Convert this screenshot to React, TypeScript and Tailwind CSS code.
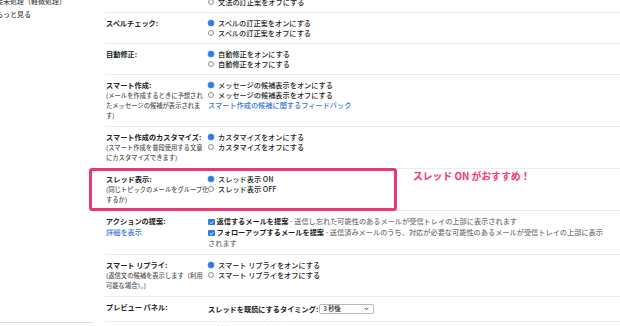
import React from "react";

function Radio({ checked, children }: { checked?: boolean; children: React.ReactNode }) {
  return (
    <div className="flex items-center h-[10px] leading-[10px]">
      {checked ? (
        <span className="w-[6px] h-[6px] rounded-full bg-[#2f7de1] shadow-[0_0_0_0.5px_#9cc0f0] shrink-0" />
      ) : (
        <span className="w-[6px] h-[6px] rounded-full border-[0.8px] border-[#8f8f8f] bg-white shrink-0" />
      )}
      <span className="ml-[4px] whitespace-nowrap">{children}</span>
    </div>
  );
}

function Check() {
  return (
    <span className="inline-flex items-center justify-center w-[6.5px] h-[6.5px] rounded-[1px] bg-[#2f7de1] align-[-0.5px] mr-[2px]">
      <svg width="5" height="5" viewBox="0 0 10 10">
        <path d="M2 5.2 L4.2 7.4 L8.2 2.8" stroke="white" strokeWidth="1.8" fill="none" />
      </svg>
    </span>
  );
}

function Row({
  label,
  sub,
  children,
  last,
}: {
  label: React.ReactNode;
  sub?: React.ReactNode;
  children: React.ReactNode;
  last?: boolean;
}) {
  return (
    <div className={"flex pt-[5px] pb-[5px] " + (last ? "" : "border-b border-[#ececec]")}>
      <div className="w-[103px] shrink-0 pl-[1px]">
        <div className="font-bold text-[7.2px] leading-[11px] text-[#222] whitespace-nowrap">{label}</div>
        {sub && <div className="font-medium text-[6.3px] leading-[10px] text-[#555] whitespace-nowrap">{sub}</div>}
      </div>
      <div className="flex-1 pr-[10px] font-medium text-[7.2px] text-[#1f1f1f]">{children}</div>
    </div>
  );
}

export default function App() {
  return (
    <div className="relative w-[620px] h-[326px] overflow-hidden bg-white flex font-['Noto_Sans_CJK_JP','Noto_Sans',sans-serif]">
      {/* Sidebar */}
      <div className="w-[93px] shrink-0 flex flex-col">
        <div className="-ml-[4px] -mt-[4px] text-[7px] font-medium text-[#444]">
          <div className="leading-[11px] whitespace-nowrap">要未処理（軽微処理）</div>
          <div className="mt-[2px] leading-[11px] whitespace-nowrap">もっと見る</div>
        </div>
        <div className="flex-1" />
        <div className="h-px bg-[#dcdcdc] mb-[3px]" />
      </div>

      {/* Main settings */}
      <div className="ml-[12px] flex-1 -mt-[18px]">
        <Row label="文法:">
          <Radio checked>文法の訂正案をオンにする</Radio>
          <Radio>文法の訂正案をオフにする</Radio>
        </Row>
        <Row label="スペルチェック:">
          <Radio checked>スペルの訂正案をオンにする</Radio>
          <Radio>スペルの訂正案をオフにする</Radio>
        </Row>
        <Row label="自動修正:">
          <Radio checked>自動修正をオンにする</Radio>
          <Radio>自動修正をオフにする</Radio>
        </Row>
        <Row
          label="スマート作成:"
          sub={
            <>
              (メールを作成するときに予想され
              <br />
              たメッセージの候補が表示されま
              <br />
              す)
            </>
          }
        >
          <Radio checked>メッセージの候補表示をオンにする</Radio>
          <Radio>メッセージの候補表示をオフにする</Radio>
          <div className="leading-[10px] text-[#3b78d8] whitespace-nowrap">スマート作成の候補に関するフィードバック</div>
        </Row>
        <Row
          label="スマート作成のカスタマイズ:"
          sub={
            <>
              (スマート作成を普段使用する文章
              <br />
              にカスタマイズできます)
            </>
          }
        >
          <Radio checked>カスタマイズをオンにする</Radio>
          <Radio>カスタマイズをオフにする</Radio>
        </Row>
        <Row
          label="スレッド表示:"
          sub={
            <>
              (同じトピックのメールをグループ化
              <br />
              するか)
            </>
          }
        >
          <Radio checked>スレッド表示 ON</Radio>
          <Radio>スレッド表示 OFF</Radio>
        </Row>
        <Row
          label="アクションの提案:"
          sub={<span className="text-[7.2px] text-[#3b78d8]">詳細を表示</span>}
        >
          <div className="leading-[11px] whitespace-nowrap">
            <Check />
            <span className="font-bold">返信するメールを提案</span>
            <span className="text-[#777]"> - 送信し忘れた可能性のあるメールが受信トレイの上部に表示されます</span>
          </div>
          <div className="leading-[11px] whitespace-nowrap">
            <Check />
            <span className="font-bold">フォローアップするメールを提案</span>
            <span className="text-[#777]">
              {" "}
              - 送信済みメールのうち、対応が必要な可能性のあるメールが受信トレイの上部に表示
              <br />
              されます
            </span>
          </div>
        </Row>
        <Row
          label="スマート リプライ:"
          sub={
            <>
              (返信文の候補を表示します（利用
              <br />
              可能な場合）。)
            </>
          }
        >
          <Radio checked>スマート リプライをオンにする</Radio>
          <Radio>スマート リプライをオフにする</Radio>
        </Row>
        <div className="flex pt-[5px] pb-[5px] border-b border-[#ececec]">
          <div className="w-[103px] shrink-0 pl-[1px]">
            <div className="font-bold text-[7.2px] leading-[11px] text-[#222] whitespace-nowrap">プレビュー パネル:</div>
          </div>
          <div className="flex-1 flex items-center h-[14px] text-[7.2px] text-[#222]">
            <span className="font-bold whitespace-nowrap">スレッドを既読にするタイミング:</span>
            <div className="ml-[1px] w-[55px] h-[10px] border border-[#b8b8b8] rounded-[2px] flex items-center justify-between pl-[3px] pr-[4px] text-[6.3px] font-medium leading-[8px]">
              <span className="whitespace-nowrap">3 秒後</span>
              <svg width="5" height="4" viewBox="0 0 10 8">
                <path d="M1.5 2 L5 5.5 L8.5 2" stroke="#333" strokeWidth="1.8" fill="none" />
              </svg>
            </div>
          </div>
        </div>
        <div className="flex pt-[1px]">
          <div className="w-[103px] shrink-0 pl-[1px]">
            <div className="font-bold text-[7.2px] leading-[11px] text-[#222] whitespace-nowrap mt-[3px]">デスクトップ通知:</div>
          </div>
          <div className="flex-1 text-[7.2px] font-medium text-[#222] leading-[11px] whitespace-nowrap mt-[1px]">
            <Check />
            新着メールの通知を有効にする
          </div>
        </div>
      </div>

      {/* Annotation overlay */}
      <div className="absolute left-[89px] top-[168px] w-[308px] h-[43px] border-[3px] border-[#e8387a] rounded-[3px]" />
      <div className="absolute left-[413px] top-[170px] text-[9.8px] leading-[12px] font-bold text-[#e8407a] whitespace-nowrap [text-shadow:0_0_2px_#ffd6e4]">
        スレッド ON がおすすめ！
      </div>
    </div>
  );
}
